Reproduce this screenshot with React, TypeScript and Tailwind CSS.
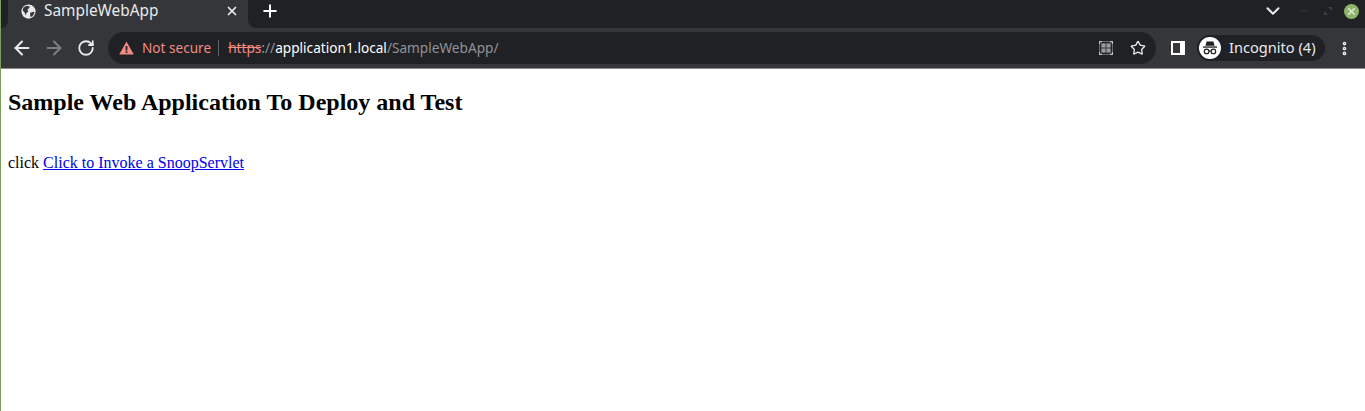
import { ArrowLeft, ArrowRight, Plus, RotateCw, Star, X, ChevronDown, EllipsisVertical, Minus } from 'lucide-react';

const uiFont = "font-['Noto_Sans',sans-serif]";

function Globe() {
  return (
    <svg width="15" height="15" viewBox="0 0 16 16" className="shrink-0">
      <circle cx="8" cy="8" r="7.6" fill="#e8eaed" />
      <path d="M2.6 3.6 6 1.8l3.4.8-.8 2-1.8 1.2 1 2.2-1.8 1.2-.8 3-1.2-3L1.8 7z" fill="#35363a" />
      <path d="M9.8 9.4l3.6-1.2 1.2 1-2.6 4.2-2.2.2z" fill="#35363a" />
    </svg>
  );
}

function WarningIcon() {
  return (
    <svg width="15" height="14" viewBox="0 0 15 14" className="shrink-0">
      <path d="M7.5 0.5 14.8 13.5H0.2z" fill="#f28b82" />
      <rect x="6.6" y="5" width="1.8" height="4.5" fill="#202124" />
      <rect x="6.6" y="10.4" width="1.8" height="1.6" fill="#202124" />
    </svg>
  );
}

function ScanIcon() {
  return (
    <svg width="14" height="14" viewBox="0 0 14 14" className="shrink-0" fill="none">
      <path d="M.6 3V.6H3M11 .6h2.4V3M13.4 11v2.4H11M3 13.4H.6V11" stroke="#bdc1c6" strokeWidth="1.2" />
      <path d="M3 .6h8M3 13.4h8M.6 3v8M13.4 3v8" stroke="#6f7276" strokeWidth="1" />
      <rect x="2.4" y="2.4" width="4.2" height="4.2" fill="#9a9da0" />
      <rect x="7.4" y="2.4" width="4.2" height="4.2" fill="#9a9da0" />
      <rect x="2.4" y="7.4" width="4.2" height="4.2" fill="#9a9da0" />
      <rect x="7.4" y="7.4" width="4.2" height="4.2" fill="#9a9da0" />
    </svg>
  );
}

function IncognitoBadge() {
  return (
    <div className="flex h-[22px] w-[22px] shrink-0 items-center justify-center rounded-full bg-white">
      <svg width="18" height="18" viewBox="0 0 18 18">
        <path d="M5.6 2.5h6.8l1.2 4.2H4.4z" fill="#202124" />
        <rect x="2" y="7.4" width="14" height="1.3" fill="#202124" />
        <circle cx="5.6" cy="12.4" r="2.3" fill="none" stroke="#202124" strokeWidth="1.2" />
        <circle cx="12.4" cy="12.4" r="2.3" fill="none" stroke="#202124" strokeWidth="1.2" />
        <path d="M7.8 11.9h2.4" stroke="#202124" strokeWidth="1.2" />
      </svg>
    </div>
  );
}

function MaximizeIcon() {
  return (
    <svg width="8" height="8" viewBox="0 0 8 8" className="ml-[15px] shrink-0">
      <path d="M4 0h4v4zM0 4l4 4H0z" fill="#3e4044" />
    </svg>
  );
}

function TabStrip() {
  return (
    <div className="flex h-[28px] items-stretch bg-[#35363a]">
      <div className="w-[7px] rounded-br-lg bg-[#202124]" />
      <div className="flex w-[240px] items-center pb-[6px] pl-[13px] pr-[9px]">
        <Globe />
        <span className="ml-[8px] flex-1 text-[15.4px] text-[#e8eaed]">SampleWebApp</span>
        <X size={14} strokeWidth={3} className="text-[#e8eaed]" />
      </div>
      <div className="flex flex-1 items-center rounded-bl-lg bg-[#202124] pb-[6px] pl-[12px] pr-[6px]">
        <Plus size={20} strokeWidth={2.4} className="text-white" />
        <div className="ml-auto flex items-center">
          <ChevronDown size={22} strokeWidth={2.2} className="text-[#e8eaed]" />
          <Minus size={10} className="ml-[15px] text-[#3e4044]" />
          <MaximizeIcon />
          <div className="ml-[12px] flex h-[15px] w-[15px] items-center justify-center rounded-full bg-[#8fb36a]">
            <X size={11} strokeWidth={3.5} className="text-[#dfe8d2]" />
          </div>
        </div>
      </div>
    </div>
  );
}

function Toolbar() {
  return (
    <div className="flex h-[41px] items-center border-b border-[#8a8b8d] bg-[#35363a] pl-[10px]">
      <ArrowLeft size={22} strokeWidth={2.2} className="text-[#e8eaed]" />
      <ArrowRight size={22} strokeWidth={2.2} className="ml-[10px] text-[#7c7e81]" />
      <RotateCw size={18} strokeWidth={2.4} className="ml-[12px] text-[#e8eaed]" />
      <div className="ml-[13px] flex h-[32px] w-[1048px] items-center rounded-full bg-[#202124] pl-[11px] pr-[10px]">
        <WarningIcon />
        <span className="ml-[8px] text-[13.6px] text-[#f28b82]">Not secure</span>
        <div className="ml-[7px] h-[16px] w-px bg-[#5f6368]" />
        <div className="ml-[9px] text-[13.65px] text-[#8f9397]">
          <span className="text-[#f28b82] line-through">https</span>
          <span>://</span>
          <span className="text-white">application1.local</span>
          <span>/SampleWebApp/</span>
        </div>
        <div className="ml-auto">
          <ScanIcon />
        </div>
        <Star size={16} strokeWidth={2} className="ml-[17px] text-[#e8eaed]" />
      </div>
      <div className="ml-[15px] flex h-[14px] w-[14px] justify-end border-2 border-white">
        <div className="h-full w-[3px] bg-white" />
      </div>
      <div className="ml-[12px] flex h-[26px] w-[128px] items-center rounded-full bg-[#202124] pl-[2px]">
        <IncognitoBadge />
        <span className="ml-[8px] pb-[1px] text-[14.6px] text-[#e8eaed]">Incognito (4)</span>
      </div>
      <EllipsisVertical size={17} strokeWidth={3.2} className="ml-[11px] text-[#e8eaed]" />
    </div>
  );
}

export default function App() {
  return (
    <div className="flex h-[411px] w-[1365px] flex-col overflow-hidden border-l border-[#7ba05b] bg-white">
      <div className={uiFont}>
        <TabStrip />
        <Toolbar />
      </div>
      <div className="px-[7px] font-['Liberation_Serif',serif] text-[16px] text-black">
        <h2 className="mt-[20px] text-[24px] leading-[27px] font-bold">Sample Web Application To Deploy and Test</h2>
        <p className="mt-[38px] leading-[18px]">
          click{' '}
          <a href="#" className="text-[#0000ee] underline">
            Click to Invoke a SnoopServlet
          </a>
        </p>
      </div>
    </div>
  );
}
